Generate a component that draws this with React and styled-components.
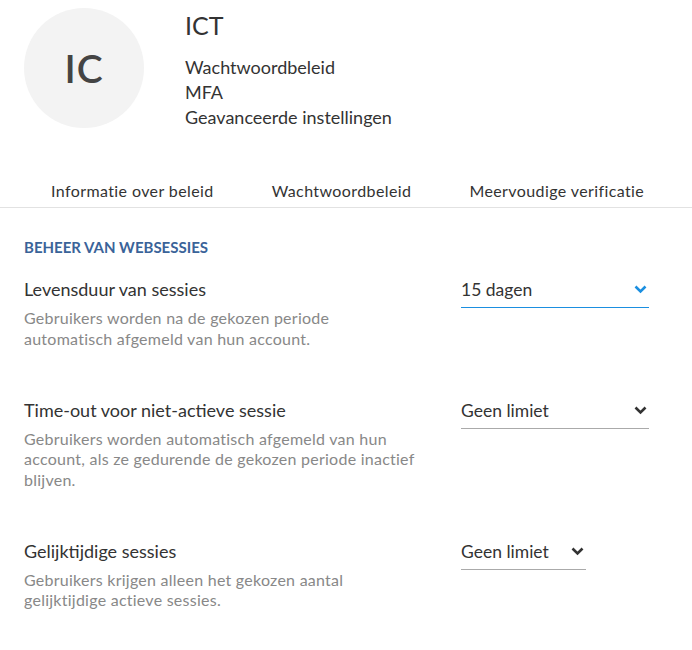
import React from 'react';
import styled, { createGlobalStyle } from 'styled-components';

const GlobalStyle = createGlobalStyle`
  body {
    margin: 0;
    background: #fff;
    font-family: Lato, "Open Sans", sans-serif;
    color: #333;
  }
`;

const Page = styled.div`
  width: 692px;
`;

const Header = styled.div`
  display: flex;
  padding: 8px 0 0 24px;
  gap: 41px;
`;

const Avatar = styled.div`
  width: 120px;
  height: 120px;
  border-radius: 50%;
  background: #f3f3f3;
  display: flex;
  align-items: center;
  justify-content: center;
  font-size: 39px;
  font-weight: 600;
  color: #444;
  letter-spacing: 1px;
`;

const HeaderInfo = styled.div`
  display: flex;
  flex-direction: column;
`;

const Name = styled.h1`
  margin: 2px 0 15px;
  font-size: 25px;
  font-weight: 400;
  line-height: 30px;
  color: #333;
`;

const NavLink = styled.div`
  font-size: 18px;
  line-height: 25px;
  color: #333;
`;

const Tabs = styled.div`
  display: flex;
  gap: 58px;
  padding: 51px 0 0 51px;
  border-bottom: 1px solid #e2e2e2;
`;

const Tab = styled.div`
  font-size: 16px;
  letter-spacing: 0.4px;
  line-height: 20px;
  padding-bottom: 6px;
  color: #333;
`;

const Section = styled.div`
  padding: 30px 24px 0;
`;

const SectionTitle = styled.h2`
  margin: 0 0 22px;
  font-size: 15px;
  font-weight: 700;
  color: #3a6399;
  line-height: 18px;
`;

const Row = styled.div`
  display: flex;
  justify-content: space-between;
  margin-bottom: 49.5px;
`;

const TextCol = styled.div`
  width: 420px;
`;

const Label = styled.div`
  font-size: 18px;
  line-height: 22px;
  color: #333;
  margin-bottom: 8px;
`;

const Desc = styled.div`
  font-size: 16px;
  letter-spacing: 0.25px;
  line-height: 20.5px;
  color: #888;
`;

const Select = styled.div`
  width: ${(p) => p.width}px;
  height: 30px;
  margin-right: ${(p) => p.right}px;
  box-sizing: border-box;
  display: flex;
  align-items: flex-start;
  justify-content: space-between;
  border-bottom: 1px solid ${(p) => (p.active ? '#1b8fe0' : '#aaa')};
  font-size: 17.5px;
  line-height: 22px;
  color: #333;
  padding-top: 1px;
`;

const Chevron = ({ color }) => (
  <svg width="13" height="9" viewBox="0 0 13 9" style={{ marginTop: 6, marginRight: 2 }}>
    <path d="M1.5 1.5 L6.5 6.5 L11.5 1.5" fill="none" stroke={color} strokeWidth="2.6" />
  </svg>
);

const settings = [
  {
    label: 'Levensduur van sessies',
    desc: ['Gebruikers worden na de gekozen periode', 'automatisch afgemeld van hun account.'],
    value: '15 dagen',
    width: 188,
    right: 19,
    active: true,
  },
  {
    label: 'Time-out voor niet-actieve sessie',
    desc: [
      'Gebruikers worden automatisch afgemeld van hun',
      'account, als ze gedurende de gekozen periode inactief',
      'blijven.',
    ],
    value: 'Geen limiet',
    width: 188,
    right: 19,
  },
  {
    label: 'Gelijktijdige sessies',
    desc: ['Gebruikers krijgen alleen het gekozen aantal', 'gelijktijdige actieve sessies.'],
    value: 'Geen limiet',
    width: 125,
    right: 82,
  },
];

const App = () => {
  return (
    <Page>
      <GlobalStyle />
      <Header>
        <Avatar>IC</Avatar>
        <HeaderInfo>
          <Name>ICT</Name>
          <NavLink>Wachtwoordbeleid</NavLink>
          <NavLink>MFA</NavLink>
          <NavLink>Geavanceerde instellingen</NavLink>
        </HeaderInfo>
      </Header>
      <Tabs>
        <Tab>Informatie over beleid</Tab>
        <Tab>Wachtwoordbeleid</Tab>
        <Tab>Meervoudige verificatie</Tab>
      </Tabs>
      <Section>
        <SectionTitle>BEHEER VAN WEBSESSIES</SectionTitle>
        {settings.map((s) => (
          <Row key={s.label}>
            <TextCol>
              <Label>{s.label}</Label>
              <Desc>
                {s.desc.map((d) => (
                  <div key={d}>{d}</div>
                ))}
              </Desc>
            </TextCol>
            <Select width={s.width} right={s.right} active={s.active}>
              <span>{s.value}</span>
              <Chevron color={s.active ? '#1b8fe0' : '#333'} />
            </Select>
          </Row>
        ))}
      </Section>
    </Page>
  );
};

export default App;
